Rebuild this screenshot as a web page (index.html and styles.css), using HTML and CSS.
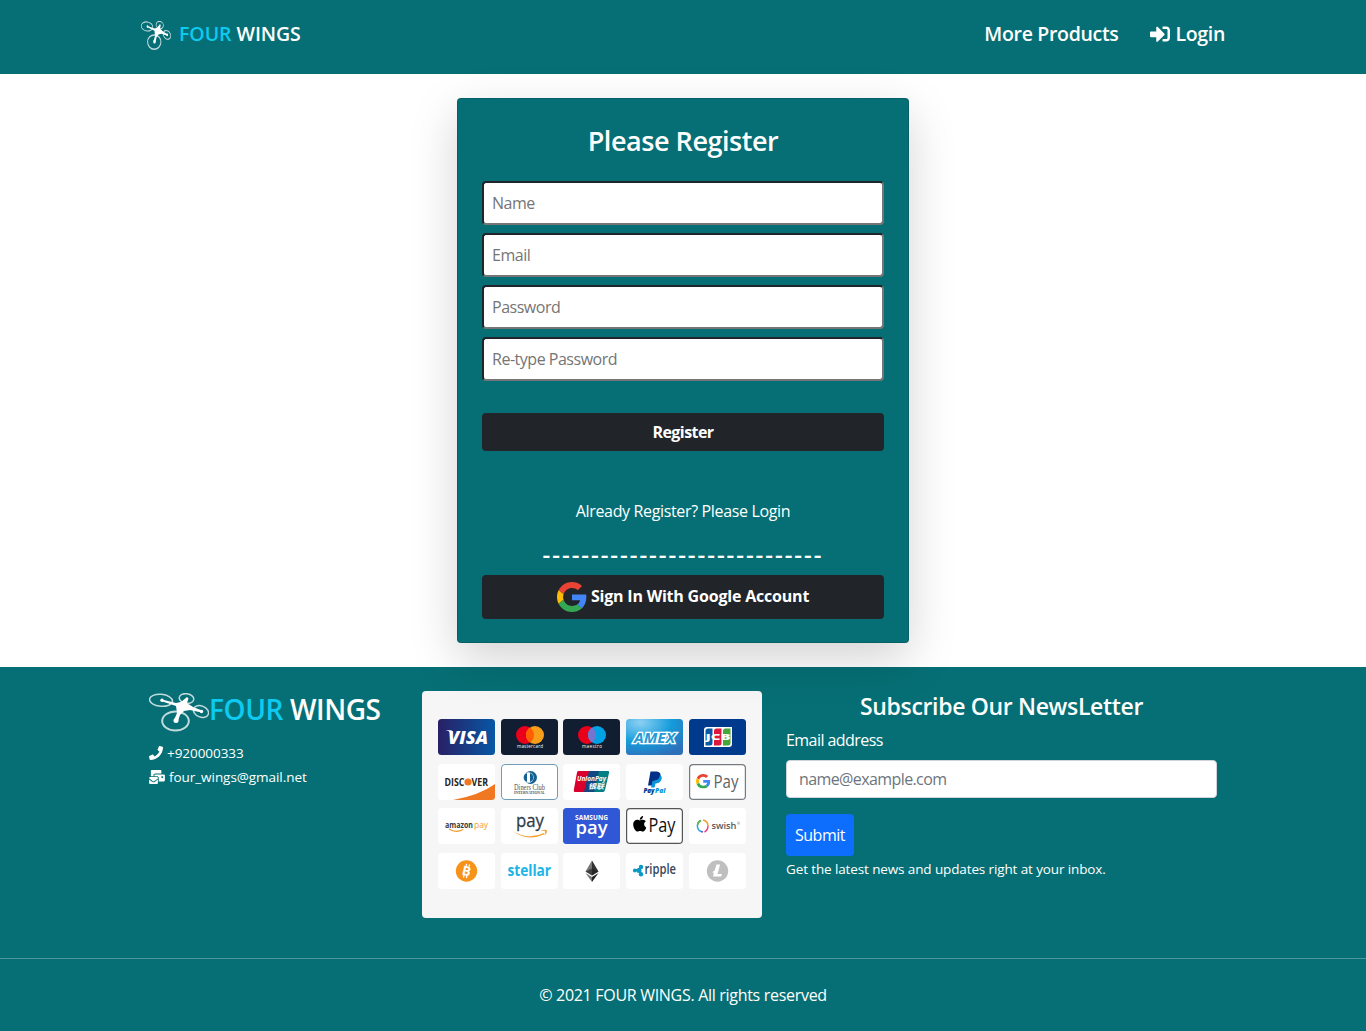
FILE: index.html
```html
<!DOCTYPE html>
<html lang="en">
<head>
<meta charset="utf-8">
<title>Four Wings</title>
<link rel="stylesheet" href="styles.css">
</head>
<body>
<svg class="defs" width="0" height="0">
  <symbol id="drone" viewBox="0 0 60 40" preserveAspectRatio="none">
    <g fill="none" stroke="#fff" stroke-opacity=".75" stroke-width="1.5">
      <ellipse cx="12" cy="7.300" rx="11.500" ry="6" transform="rotate(5 12 7.300)"/>
      <ellipse cx="37.500" cy="5.500" rx="7.300" ry="4.800" transform="rotate(8 37.500 5.500)"/>
      <ellipse cx="52" cy="18.500" rx="7.800" ry="5.500" transform="rotate(22 52 18.500)"/>
      <ellipse cx="26.500" cy="28" rx="13.300" ry="9.500" stroke-width="2"/>
    </g>
    <path fill="#fff" d="M13 6.500L27 10l5-1 6-5 1.500 1.500L38 10l6 4 9 3.500-.5 2L41 17l-6 1-4 4-2 6-4-1 3-7-1-7-15-5z"/>
    <g fill="#fff"><circle cx="13" cy="7.200" r="1.700"/><circle cx="52.500" cy="18.500" r="1.700"/><circle cx="27" cy="27.500" r="2.500"/></g>
  </symbol>
  <symbol id="google" viewBox="0 0 48 48">
    <path fill="#EA4335" d="M24 9.500c3.540 0 6.710 1.220 9.210 3.600l6.850-6.850C35.900 2.380 30.470 0 24 0 14.620 0 6.510 5.380 2.560 13.220l7.980 6.190C12.430 13.720 17.740 9.500 24 9.500z"/>
    <path fill="#4285F4" d="M46.980 24.550c0-1.570-.15-3.090-.38-4.550H24v9.020h12.940c-.58 2.960-2.260 5.480-4.780 7.180l7.730 6c4.510-4.180 7.090-10.360 7.090-17.650z"/>
    <path fill="#FBBC05" d="M10.530 28.590c-.48-1.450-.76-2.990-.76-4.590s.27-3.140.76-4.590l-7.980-6.190C.92 16.460 0 20.120 0 24s.92 7.540 2.560 10.780l7.970-6.190z"/>
    <path fill="#34A853" d="M24 48c6.480 0 11.930-2.130 15.890-5.810l-7.730-6c-2.150 1.450-4.920 2.300-8.160 2.300-6.260 0-11.570-4.220-13.470-9.910l-7.980 6.190C6.510 42.620 14.620 48 24 48z"/>
  </symbol>
  <linearGradient id="visa"><stop offset="0" stop-color="#282065"/><stop offset="1" stop-color="#0757a5"/></linearGradient>
  <radialGradient id="amex" cx=".25" cy=".1" r="1"><stop offset="0" stop-color="#8bd0f3"/><stop offset=".55" stop-color="#159cda"/><stop offset="1" stop-color="#2e6fba"/></radialGradient>
</svg>

<header class="navbar">
  <a class="brand"><svg class="brand-icon" viewBox="0 0 30 30"><use href="#drone" width="30" height="30"/></svg><span class="brand-text"><b>FOUR</b> WINGS</span></a>
  <nav class="links">
    <a class="products">More Products</a>
    <a class="login"><svg class="login-icon" viewBox="0 0 512 512"><path fill="#fff" d="M416 448h-84c-6.600 0-12-5.400-12-12v-40c0-6.600 5.400-12 12-12h84c17.700 0 32-14.300 32-32V160c0-17.700-14.300-32-32-32h-84c-6.600 0-12-5.400-12-12V76c0-6.600 5.400-12 12-12h84c53 0 96 43 96 96v192c0 53-43 96-96 96zm-47-201L201 79c-15-15-41-4.500-41 17v96H24c-13.300 0-24 10.700-24 24v96c0 13.300 10.700 24 24 24h136v96c0 21.500 26 32 41 17l168-168c9.300-9.400 9.300-24.600 0-34z"/></svg><span>Login</span></a>
  </nav>
</header>

<main>
  <form class="card">
    <h1>Please Register</h1>
    <input class="field" type="text" placeholder="Name">
    <input class="field" type="email" placeholder="Email">
    <input class="field" type="password" placeholder="Password">
    <input class="field" type="password" placeholder="Re-type Password">
    <button type="button" class="dark register">Register</button>
    <p class="already">Already Register? Please Login</p>
    <p class="rule">-----------------------------</p>
    <button type="button" class="dark google"><svg class="g"><use href="#google"/></svg><span>Sign In With Google Account</span></button>
  </form>
</main>

<footer>
  <div class="columns">
    <section class="about">
      <div class="about-brand"><svg class="about-icon" viewBox="0 0 60 40"><use href="#drone" width="60" height="40"/></svg><span><b>FOUR</b> WINGS</span></div>
      <p><svg class="phone" viewBox="0 0 512 512"><path fill="#fff" d="M493.400 24.600l-104-24c-11.300-2.600-22.900 3.300-27.500 13.900l-48 112c-4.200 9.800-1.400 21.300 6.900 28l60.600 49.600c-36 76.700-98.900 140.500-177.200 177.200l-49.600-60.600c-6.800-8.300-18.200-11.100-28-6.900l-112 48C3.900 366.500-2 378.100.6 389.400l24 104C27.100 504.200 36.700 512 48 512c256.100 0 464-207.500 464-464 0-11.200-7.700-20.900-18.600-23.400z"/></svg><span class="tel">+920000333</span></p>
      <p><svg class="mail" viewBox="0 0 576 512"><path fill="#fff" d="M160 448c-25.600 0-51.200-22.400-64-32-64-44.800-83.200-60.800-96-70.400V480c0 17.670 14.330 32 32 32h256c17.670 0 32-14.330 32-32V345.600c-12.800 9.600-32 25.600-96 70.400-12.800 9.600-38.400 32-64 32zm128-192H32c-17.670 0-32 14.330-32 32v16c25.600 19.200 22.400 19.200 115.200 86.400 9.600 6.400 28.800 25.600 44.800 25.600s35.200-19.200 44.800-22.400c92.800-67.200 89.600-67.200 115.200-86.400V288c0-17.670-14.330-32-32-32zm256-96H224c-17.670 0-32 14.330-32 32v32h96c33.210 0 60.590 25.420 63.710 57.820l.29-.22V416h192c17.670 0 32-14.330 32-32V192c0-17.670-14.330-32-32-32zm-32 128h-64v-64h64v64zm-352-96c0-35.290 28.710-64 64-64h224V32c0-17.670-14.330-32-32-32H96C78.330 0 64 14.330 64 32v192h96v-32z"/></svg><span class="address">four_wings@gmail.net</span></p>
    </section>

    <section class="payments">
      <svg class="tile visa" viewBox="0 0 57 36"><rect width="57" height="36" rx="3.500" fill="url(#visa)"/><text x="10" y="24.500" font-size="18" font-weight="800" font-style="italic" fill="#fff" textLength="40" lengthAdjust="spacingAndGlyphs">VISA</text><path d="M7.500 11.300h6l2 5c-1.500-2.400-4-4-8-5z" fill="#fff"/></svg>
      <svg class="tile navy" viewBox="0 0 57 36"><rect width="57" height="36" rx="3.500" fill="#111e31"/><circle cx="24" cy="16" r="9" fill="#eb001b"/><circle cx="34" cy="16" r="9" fill="#f79e1b"/><path d="M29 8.500a9 9 0 0 1 0 15 9 9 0 0 1 0-15z" fill="#ff5f00"/><text x="16" y="29" font-size="4.500" fill="#fff" textLength="26">mastercard</text></svg>
      <svg class="tile navy" viewBox="0 0 57 36"><rect width="57" height="36" rx="3.500" fill="#111e31"/><circle cx="24" cy="16" r="9" fill="#eb001b"/><circle cx="34" cy="16" r="9" fill="#00a2e5"/><path d="M29 8.500a9 9 0 0 1 0 15 9 9 0 0 1 0-15z" fill="#7375cf"/><text x="19" y="29" font-size="4.500" fill="#fff" textLength="20">maestro</text></svg>
      <svg class="tile" viewBox="0 0 57 36"><rect width="57" height="36" rx="3.500" fill="url(#amex)"/><text x="8" y="23.500" font-size="15" font-weight="700" font-style="italic" fill="#279ad5" stroke="#fff" stroke-width="2.600" paint-order="stroke" textLength="41" lengthAdjust="spacingAndGlyphs">AMEX</text></svg>
      <svg class="tile" viewBox="0 0 57 36"><rect width="57" height="36" rx="3.500" fill="#003a8c"/><path d="M18 8h25v17q0 3-3 3H15V11q0-3 3-3z" fill="#fff"/><path d="M19 9.500H23.500V24q0 2.500-2.500 2.500H16.500V12q0-2.500 2.500-2.500z" fill="#0859a8"/><path d="M27.500 9.500H32.500V24q0 2.500-2.500 2.500H25V12q0-2.500 2.500-2.500z" fill="#df183d"/><path d="M36.500 9.500H41.500V24q0 2.500-2.500 2.500H34V12q0-2.500 2.500-2.500z" fill="#46a638"/><text x="16.500" y="20.800" font-size="8" font-weight="800" fill="#fff" textLength="25" lengthAdjust="spacingAndGlyphs">JCB</text></svg>

      <svg class="tile" viewBox="0 0 57 36"><rect width="57" height="36" rx="3.500" fill="#fff"/><path d="M15 36Q42 31 57 20v12.500q0 3.500-3.500 3.500z" fill="#f17822"/><text x="6.500" y="21.700" font-size="10.500" font-weight="700" fill="#252525" textLength="20" lengthAdjust="spacingAndGlyphs">DISC</text><circle cx="30" cy="18" r="3.600" fill="#f17822"/><text x="33.500" y="21.700" font-size="10.500" font-weight="700" fill="#252525" textLength="16.500" lengthAdjust="spacingAndGlyphs">VER</text></svg>
      <svg class="tile" viewBox="0 0 57 36"><rect x=".5" y=".5" width="56" height="35" rx="3.500" fill="#fff" stroke="#6f9db8"/><circle cx="29.500" cy="13.500" r="6.500" fill="#126094"/><circle cx="27.500" cy="13.500" r="5.200" fill="#fff"/><path d="M26 9v9a4.700 4.700 0 0 1 0-9zm3 0v9a4.700 4.700 0 0 0 0-9z" fill="#126094"/><text class="serif" x="13" y="25.500" font-size="7.500" fill="#48515c" textLength="31" lengthAdjust="spacingAndGlyphs">Diners Club</text><text class="serif" x="13" y="29.500" font-size="3.800" font-weight="700" fill="#48515c" textLength="31" lengthAdjust="spacingAndGlyphs">INTERNATIONAL</text></svg>
      <svg class="tile" viewBox="0 0 57 36"><rect width="57" height="36" rx="3.500" fill="#fff"/><path d="M15 7h13l-5 21H11.500q-1-.5-.7-2L14 8.500q.3-1 1-1.500z" fill="#d9002d"/><path d="M26 7h12l-5 21H21z" fill="#12477f"/><path d="M36 7h9.500q1 .3.500 2l-4 17q-.5 2-2 2h-9z" fill="#027f85"/><text x="14" y="17" font-size="7" font-style="italic" font-weight="700" fill="#fff" textLength="29" lengthAdjust="spacingAndGlyphs">UnionPay</text><text class="cjk" x="25" y="25" font-size="7" font-style="italic" font-weight="700" fill="#fff" textLength="16" lengthAdjust="spacingAndGlyphs">银联</text></svg>
      <svg class="tile" viewBox="0 0 57 36"><rect width="57" height="36" rx="3.500" fill="#fff"/><path d="M24.500 7.500H31q5 1 3 6-1.500 3.500-7 3.500l-1 4.500h-4z" fill="#003087"/><path d="M34 11q3 2 1 5.500-1.500 3-5.500 3l-1 4h-3.500l1.700-6.500Q33 17 34 11z" fill="#0796dc"/><text x="17.500" y="28.500" font-size="6.700" font-style="italic" font-weight="800" fill="#003087" textLength="11" lengthAdjust="spacingAndGlyphs">Pay</text><text x="29" y="28.500" font-size="6.700" font-style="italic" font-weight="800" fill="#0796dc" textLength="10.500" lengthAdjust="spacingAndGlyphs">Pal</text></svg>
      <svg class="tile" viewBox="0 0 57 36"><rect x=".6" y=".6" width="55.800" height="34.800" rx="3.500" fill="#fff" stroke="#777b80" stroke-width="1.200"/><use href="#google" x="7" y="10" width="14.500" height="14.500"/><text x="24.500" y="23.500" font-size="17.500" fill="#5f6368" textLength="25" lengthAdjust="spacingAndGlyphs">Pay</text></svg>

      <svg class="tile" viewBox="0 0 57 36"><rect width="57" height="36" rx="3.500" fill="#fff"/><text x="7" y="20" font-size="8.500" font-weight="700" fill="#393b3e" textLength="28" lengthAdjust="spacingAndGlyphs">amazon</text><text x="36" y="20" font-size="8.500" fill="#f29b2d" textLength="14" lengthAdjust="spacingAndGlyphs">pay</text><path d="M11 21q7 4.500 14 .5" stroke="#f29b2d" stroke-width="1.200" fill="none"/></svg>
      <svg class="tile" viewBox="0 0 57 36"><rect width="57" height="36" rx="3.500" fill="#fff"/><text x="15" y="18.500" font-size="19" fill="#303c4a" stroke="#303c4a" stroke-width=".3" textLength="28" lengthAdjust="spacingAndGlyphs">pay</text><path d="M12 23q15 9.500 31 2l.5 1.200Q26 34 12 23zM40 22.500q5-1.500 6 0 .5 2.500-2.500 5 1-3 .5-4.500-1.500-.5-4 0z" fill="#f8a12e"/></svg>
      <svg class="tile" viewBox="0 0 57 36"><rect width="57" height="36" rx="3.500" fill="#3057d5"/><text x="12" y="12" font-size="6.500" font-weight="700" fill="#fff" textLength="33">SAMSUNG</text><text x="12.500" y="26" font-size="18" font-weight="600" fill="#fff" textLength="32" lengthAdjust="spacingAndGlyphs">pay</text></svg>
      <svg class="tile" viewBox="0 0 57 36"><rect x=".6" y=".6" width="55.800" height="34.800" rx="3.500" fill="#fff" stroke="#555" stroke-width="1.200"/><svg x="7" y="7.500" width="13.500" height="16.500" viewBox="0 20 384 472"><path d="M318.700 268.700c-.2-36.700 16.400-64.400 50-84.800-18.800-26.900-47.200-41.700-84.700-44.600-35.500-2.800-74.300 20.700-88.500 20.700-15 0-49.400-19.700-76.400-19.700C63.300 141.200 4 184.800 4 273.500q0 39.300 14.400 81.200c12.800 36.700 59 126.700 107.200 125.200 25.200-.6 43-17.900 75.800-17.900 31.800 0 48.300 17.900 76.400 17.900 48.600-.7 90.400-82.500 102.600-119.300-65.200-30.700-61.700-90-61.700-91.900zm-56.600-164.200c27.300-32.400 24.800-61.900 24-72.500-24.100 1.400-52 16.400-67.900 34.900-17.500 19.800-27.800 44.300-25.600 71.900 26.100 2 49.900-11.400 69.500-34.300z"/></svg><text x="22.500" y="23.500" font-size="20.500" fill="#111" textLength="27" lengthAdjust="spacingAndGlyphs">Pay</text></svg>
      <svg class="tile" viewBox="0 0 57 36"><rect width="57" height="36" rx="3.500" fill="#fff"/><g fill="none" stroke-width="1.500"><path d="M12 12.500a6 6 0 0 0 0 11" stroke="#29a7dd"/><path d="M12 23.500l2 .5" stroke="#6950ce"/><path d="M14 12q5 1 5 6" stroke="#f29b30"/><path d="M19 18q0 4-3.500 6" stroke="#e8438d"/><path d="M8.500 17q.5-3.500 3.500-4.500" stroke="#63b546"/></g><text x="22.500" y="20.700" font-size="9" font-weight="600" fill="#55575a" textLength="25" lengthAdjust="spacingAndGlyphs">swish</text><text x="48" y="17" font-size="3.500" fill="#55575a">®</text></svg>

      <svg class="tile" viewBox="0 0 57 36"><rect width="57" height="36" rx="3.500" fill="#fff"/><circle cx="28.500" cy="18" r="10.700" fill="#f7931a"/><g transform="rotate(13 28.500 18)"><text x="24.200" y="22.500" font-size="13" font-weight="700" fill="#fff">B</text><path d="M27 11v2m3-2v2m-3 9v3m3-3v3" stroke="#fff" stroke-width="1.300"/></g></svg>
      <svg class="tile" viewBox="0 0 57 36"><rect width="57" height="36" rx="3.500" fill="#fff"/><text x="6.500" y="23" font-size="15.500" font-weight="700" fill="#1cb4e6" textLength="43.500" lengthAdjust="spacingAndGlyphs">stellar</text></svg>
      <svg class="tile" viewBox="0 0 57 36"><rect width="57" height="36" rx="3.500" fill="#fff"/><path d="M29 7.500L22.500 18.500 29 22.500z" fill="#777"/><path d="M29 7.500l6.500 11-6.500 4z" fill="#333"/><path d="M22.500 20l6.500 4v5z" fill="#777"/><path d="M35.500 20L29 24v5z" fill="#222"/><path d="M22.500 18.500l6.500-3 6.500 3-6.500 4z" fill="#222" fill-opacity=".65"/></svg>
      <svg class="tile" viewBox="0 0 57 36"><rect width="57" height="36" rx="3.500" fill="#fff"/><path d="M8 17.500h5l2.500-3.500m-2.500 3.500l2.500 4" stroke="#079ac8" stroke-width="1.500"/><g fill="#079ac8"><circle cx="8.800" cy="17.500" r="1.900"/><circle cx="13" cy="17.500" r="2.500"/><circle cx="15" cy="14" r="2.200"/><circle cx="15" cy="21.300" r="2.200"/></g><text x="18.500" y="21.300" font-size="13.500" font-weight="600" fill="#31475c" textLength="31.500" lengthAdjust="spacingAndGlyphs">ripple</text></svg>
      <svg class="tile" viewBox="0 0 57 36"><rect width="57" height="36" rx="3.500" fill="#fff"/><circle cx="28.500" cy="18" r="10.700" fill="#bfbfbf"/><path d="M27.500 11.500h3.500l-2 8-.8 1.500H33l-.8 2.500H24l1-4-1.500.5.5-1.500 1.500-.8z" fill="#fff"/></svg>
    </section>

    <section class="newsletter">
      <h2>Subscribe Our NewsLetter</h2>
      <label>Email address</label>
      <input class="email" type="email" placeholder="name@example.com">
      <button type="button" class="submit">Submit</button>
      <p>Get the latest news and updates right at your inbox.</p>
    </section>
  </div>
  <div class="copyright">© 2021 FOUR WINGS. All rights reserved</div>
</footer>
</body>
</html>
```
FILE: styles.css
```css
* { box-sizing: border-box; }
body {
  margin: 0;
  background: #fff;
  color: #fff;
  font: 400 16px/24px "Open Sans", "Noto Sans", sans-serif;
  letter-spacing: -.35px;
}
h1, h2, p { margin: 0; }
svg { display: block; flex: none; }
.defs { position: absolute; }
input, button { font: inherit; letter-spacing: inherit; margin: 0; }
b { font-weight: inherit; color: #0dcaf0; }

.navbar {
  height: 74px;
  padding: 0 141px;
  background: #066f75;
  display: flex;
  justify-content: space-between;
  align-items: flex-start;
  font-size: 20px;
  font-weight: 600;
  line-height: 30px;
}
.brand { display: flex; gap: 8px; padding-top: 19px; }
.brand-icon { width: 30px; height: 30px; margin-top: 2px; }
.brand-text { font-size: 19.500px; letter-spacing: -.050px; }
.links { display: flex; gap: 32px; padding-top: 19px; font-size: 19.500px; letter-spacing: -.320px; }
.login { display: flex; gap: 5px; }
.login-icon { width: 20px; height: 20px; margin-top: 5px; }

main { height: 593px; padding-top: 24px; }
.card {
  position: relative;
  width: 452px;
  height: 545px;
  margin: 0 auto;
  padding: 24px;
  border: 1px solid rgba(0, 0, 0, .125);
  border-radius: 4px;
  background: #066f75;
  box-shadow: 0 16px 48px rgba(0, 0, 0, .175);
  display: flex;
  flex-direction: column;
  text-align: center;
}
.card > * { flex: none; }
h1 { font-size: 27px; line-height: 34px; font-weight: 600; margin: 1px 0 23px; letter-spacing: -.450px; }
.field {
  height: 44px;
  margin-bottom: 8px;
  padding: 8px;
  border: 2px solid;
  border-color: #212529 #767676 #767676 #212529;
  border-radius: 4px;
  background: #fff;
  letter-spacing: -.480px;
}
.field::placeholder { color: #757575; }
.dark { border: 0; border-radius: 4px; background: #212529; color: #fff; font-weight: 700; }
.register { height: 38px; margin-top: 24px; letter-spacing: -.550px; }
.already { margin-top: 48px; }
.rule { margin: 18px 0 9px; font-size: 24px; line-height: 25px; font-weight: 600; letter-spacing: 1.960px; }
.google { height: 44px; display: flex; gap: 4px; justify-content: center; align-items: center; letter-spacing: -.200px; }
.google span { padding-bottom: 2px; }
.g { width: 30px; height: 30px; }

footer { height: 364px; background: #066f75; }
.columns { height: 292px; padding: 24px 149px 0; border-bottom: 1px solid #4d979b; display: flex; }
.about { width: 273px; font-size: 13.500px; letter-spacing: -.050px; }
.about-brand { display: flex; height: 50px; font-size: 28px; line-height: 36px; font-weight: 600; letter-spacing: -.400px; }
.about-icon { width: 60px; height: 40px; margin-top: 2px; }
.about p { display: flex; align-items: center; gap: 4px; }
.phone { width: 14px; height: 14px; }
.mail { width: 16px; height: 14px; }
.payments {
  width: 340px;
  height: 227px;
  padding: 28px 16px;
  border-radius: 4px;
  background: #f6f6f6;
  display: grid;
  grid-template-columns: repeat(5, 57px);
  grid-auto-rows: 36px;
  gap: 8.500px 5.700px;
  letter-spacing: 0;
}
.tile { width: 57px; height: 36px; }
.serif { font-family: "Liberation Serif", serif; }
.cjk { font-family: "Noto Sans CJK SC", sans-serif; }
.newsletter { width: 431px; margin-left: 24px; }
h2 { text-align: center; font-size: 23px; line-height: 29px; font-weight: 600; margin: 1px 0 7px; letter-spacing: -.330px; }
label { display: block; letter-spacing: -.550px; }
.email { display: block; width: 431px; height: 38px; margin: 8px 0 16px; padding: 6px 12px; border: 1px solid #ced4da; border-radius: 4px; background: #fff; letter-spacing: -.600px; }
.email::placeholder { color: #6c757d; }
.submit { display: block; width: 68px; height: 42px; padding: 0; border: 0; border-radius: 4px; background: #0d6efd; color: #fff; letter-spacing: -.450px; }
.newsletter p { font-size: 13.500px; line-height: 26px; letter-spacing: -.120px; }
.copyright { text-align: center; padding-top: 24px; letter-spacing: -.300px; }
```
